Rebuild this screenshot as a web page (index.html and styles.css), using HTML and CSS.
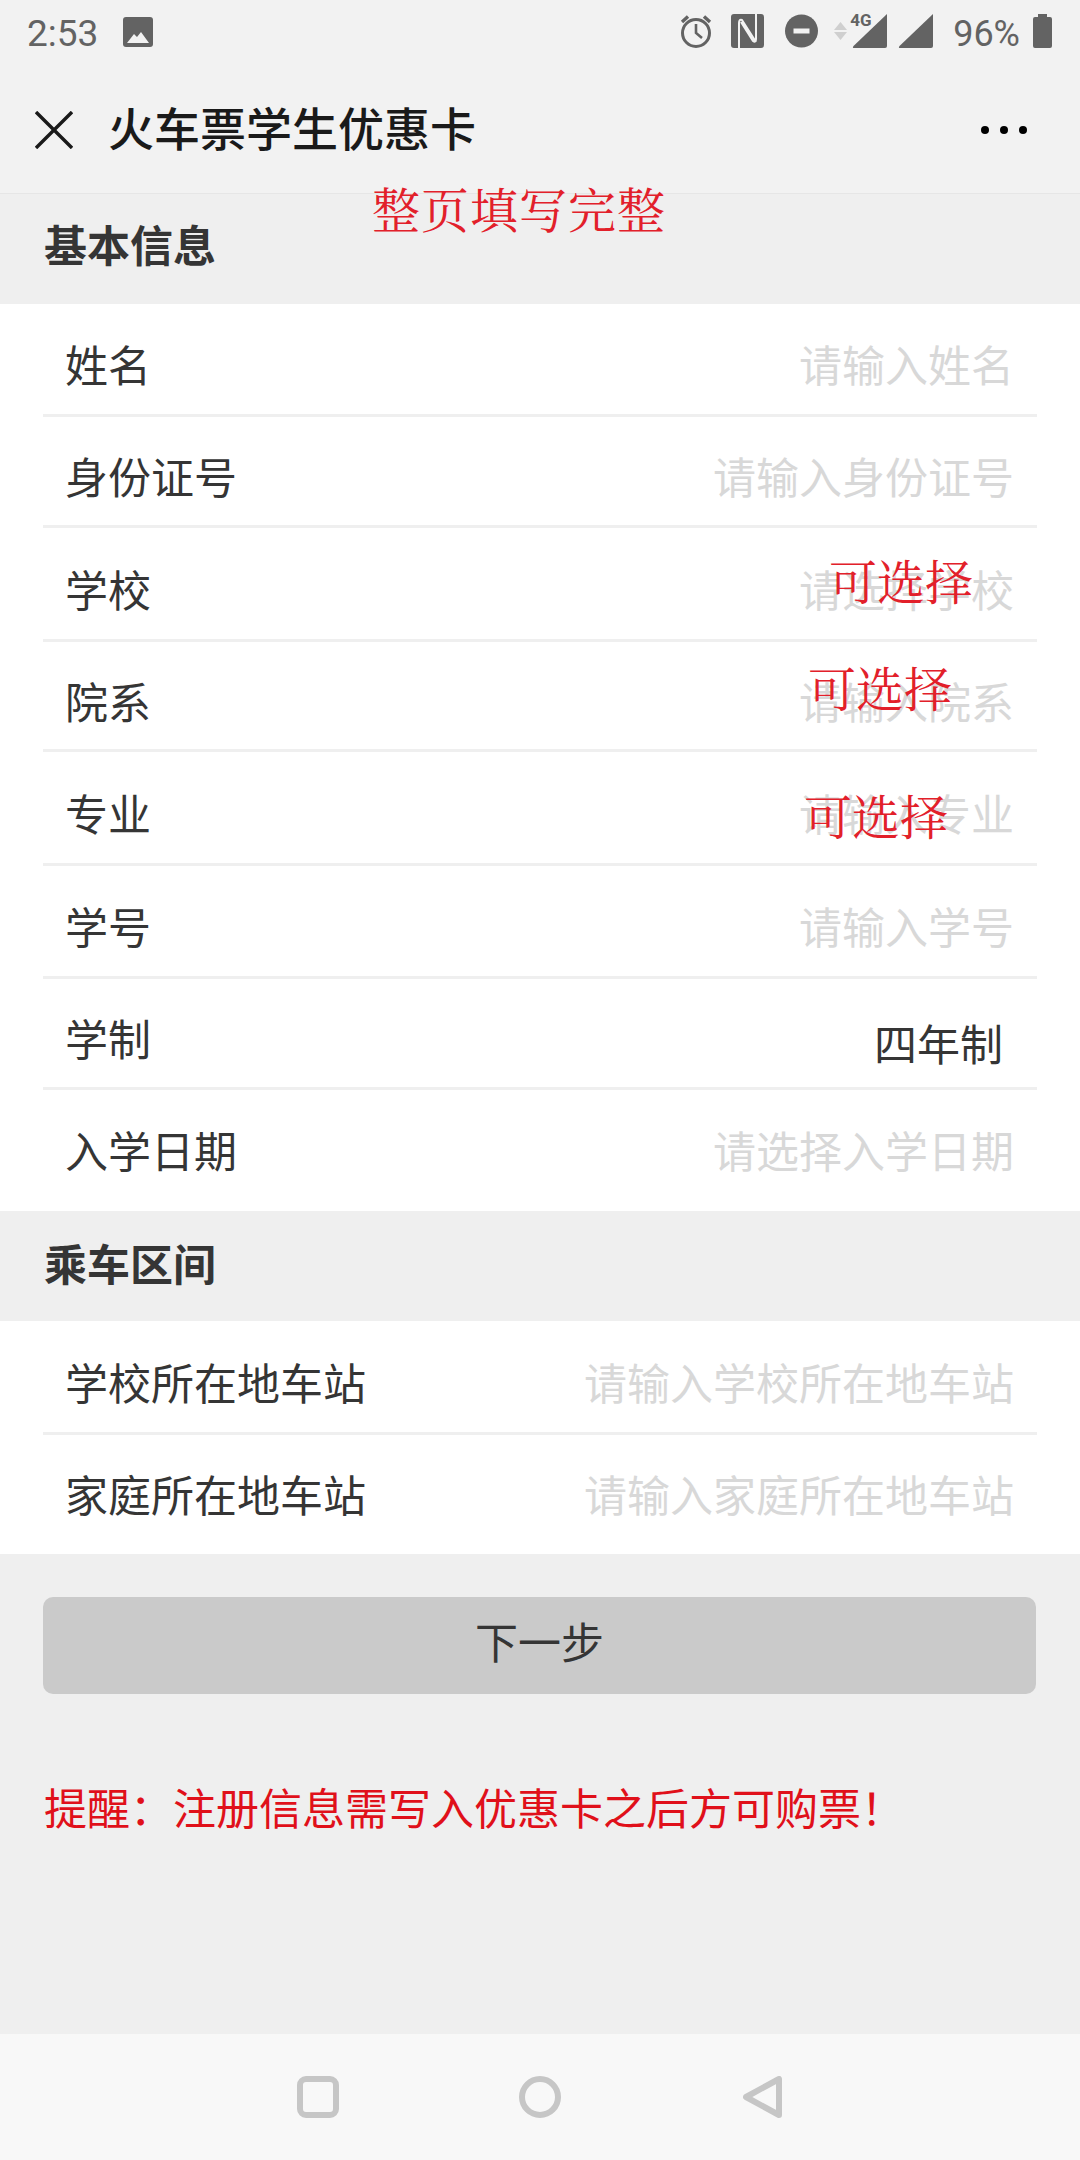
FILE: index.html
```html
<!DOCTYPE html>
<html lang="zh-CN">
<head>
  <meta charset="UTF-8" />
  <meta name="viewport" content="width=device-width, initial-scale=1.0"/>
  <title>火车票学生优惠卡</title>
  <link rel="stylesheet" href="styles.css">
</head>
<body>
  <!-- Status bar -->
  <div class="status-bar">
    <span class="clock">2:53</span>
    <svg class="pic-icon" width="30" height="30" viewBox="0 0 30 30"><rect width="30" height="30" rx="3" fill="#636363"/><path d="M4 26 L11 17 L14 20 L18 15 L26 26 Z" fill="#f2f2f2"/></svg>
    <div class="status-right">
      <svg class="alarm-icon" width="32" height="34" viewBox="0 0 32 34" fill="none" stroke="#636363" stroke-width="3"><circle cx="16" cy="19" r="13.5"/><path d="M16 10 V19 L22 24" stroke-width="2.6"/><path d="M2 8 L8 2.5 M30 8 L24 2.5" stroke-width="3.4"/></svg>
      <svg class="nfc-icon" width="33" height="34" viewBox="0 0 33 34"><rect width="33" height="34" rx="3" fill="#636363"/><path d="M8 34 V9 Q8 5 11 6 L25 28 M25 0 V25 Q25 29 22 27 L10 8" fill="none" stroke="#f2f2f2" stroke-width="2"/></svg>
      <svg width="33" height="34" viewBox="0 0 33 34"><circle cx="16.5" cy="17" r="16.5" fill="#636363"/><rect x="8.5" y="14.5" width="16" height="5" fill="#f2f2f2"/></svg>
      <div class="net">
        <svg width="13" height="18" viewBox="0 0 13 18" fill="#cfcfcf"><path d="M6.5 0 L13 8 H0 Z M0 10 H13 L6.5 18 Z"/></svg>
        <div class="net-signal">
          <span class="net-label">4G</span>
          <svg width="35" height="34" viewBox="0 0 35 34"><path d="M35 0 V32 Q35 34 33 34 H2 Q0 34 1.5 32 Z" fill="#636363"/></svg>
        </div>
      </div>
      <svg width="35" height="34" viewBox="0 0 35 34"><path d="M35 0 V32 Q35 34 33 34 H2 Q0 34 1.5 32 Z" fill="#636363"/></svg>
      <span class="battery-text">96%</span>
      <svg width="19" height="34" viewBox="0 0 19 34"><path d="M5 0 H14 V3 H17 Q19 3 19 5 V32 Q19 34 17 34 H2 Q0 34 0 32 V5 Q0 3 2 3 H5 Z" fill="#636363"/></svg>
    </div>
  </div>

  <!-- Top nav -->
  <div class="nav-bar">
    <svg class="close-icon" width="38" height="38" viewBox="0 0 38 38" stroke="#1a1a1a" stroke-width="3.4"><path d="M1 1 L37 37 M37 1 L1 37"/></svg>
    <h1 class="nav-title">火车票学生优惠卡</h1>
    <div class="more-dots"><i></i><i></i><i></i></div>
  </div>

  <div class="page">
    <div class="section-title">基本信息</div>
    <div class="form-group">
      <div class="form-row row-113"><span>姓名</span><span class="hint">请输入姓名</span></div>
      <div class="form-row row-111"><span>身份证号</span><span class="hint">请输入身份证号</span></div>
      <div class="form-row row-114"><span>学校</span><span class="hint">请选择学校</span></div>
      <div class="form-row row-110"><span>院系</span><span class="hint">请输入院系</span></div>
      <div class="form-row row-114"><span>专业</span><span class="hint">请输入专业</span></div>
      <div class="form-row row-113"><span>学号</span><span class="hint">请输入学号</span></div>
      <div class="form-row row-111"><span>学制</span><span class="value">四年制</span></div>
      <div class="form-row last-row"><span>入学日期</span><span class="hint">请选择入学日期</span></div>
    </div>

    <div class="section-title section-second">乘车区间</div>
    <div class="form-group">
      <div class="form-row row-114"><span>学校所在地车站</span><span class="hint">请输入学校所在地车站</span></div>
      <div class="form-row last-row short-last"><span>家庭所在地车站</span><span class="hint">请输入家庭所在地车站</span></div>
    </div>

    <div class="next-btn">下一步</div>
    <p class="reminder">提醒：注册信息需写入优惠卡之后方可购票！</p>
  </div>

  <!-- Bottom system nav -->
  <div class="sys-nav">
    <svg width="42" height="42" viewBox="0 0 42 42" fill="none" stroke="#c6c6c6" stroke-width="6"><rect x="3" y="3" width="36" height="36" rx="6"/></svg>
    <svg width="42" height="42" viewBox="0 0 42 42" fill="none" stroke="#c6c6c6" stroke-width="6"><circle cx="21" cy="21" r="18"/></svg>
    <svg class="back-icon" width="40" height="42" viewBox="0 0 40 42" fill="none" stroke="#c6c6c6" stroke-width="6" stroke-linejoin="round"><path d="M36 3 V39 L3 21 Z"/></svg>
  </div>

  <!-- Red notes drawn over the screenshot -->
  <div class="note note-page">整页填写完整</div>
  <div class="note note-school">可选择</div>
  <div class="note note-dept">可选择</div>
  <div class="note note-major">可选择</div>
</body>
</html>
```

FILE: styles.css
```css
* { margin: 0; padding: 0; box-sizing: border-box; }

body {
  position: relative;
  width: 1080px;
  height: 2160px;
  display: flex;
  flex-direction: column;
  overflow: hidden;
  background: #efefef;
  color: #353535;
  font-family: "Roboto", "Noto Sans CJK SC", sans-serif;
}

.status-bar {
  height: 70px;
  padding: 14px 28px 0 27px;
  display: flex;
  align-items: flex-start;
  background: #f2f2f2;
  color: #636363;
}

.clock {
  font-size: 37px;
  line-height: 36px;
  margin-top: 2px;
}

.pic-icon {
  margin: 3px 0 0 25px;
}

.status-right {
  margin-left: auto;
  display: flex;
  align-items: flex-start;
}

.status-right > svg {
  margin-right: 20px;
}

.status-right > .alarm-icon {
  margin-right: 19px;
}

.status-right > .nfc-icon {
  margin-right: 21px;
}

.net {
  display: flex;
  align-items: center;
  gap: 5px;
  margin: 0 11px 0 -4px;
  height: 34px;
}

.net-signal {
  position: relative;
  height: 34px;
}

.net-label {
  position: absolute;
  top: -1px;
  left: -2px;
  font-size: 17px;
  line-height: 14px;
  font-weight: 700;
}

.battery-text {
  font-size: 36px;
  line-height: 36px;
  margin: 2px 13px 0 0;
}

.status-right > svg:last-child {
  margin-right: 0;
}

.nav-bar {
  height: 124px;
  display: flex;
  align-items: center;
  padding: 0 53px 4px 35px;
  background: #f2f2f2;
  border-bottom: 1px solid #e6e6e6;
}

.nav-title {
  margin-left: 35px;
  padding-bottom: 8px;
  font-size: 46px;
  font-weight: 500;
  color: #1a1a1a;
}

.more-dots {
  margin-left: auto;
  display: flex;
  gap: 11px;
}

.more-dots i {
  width: 8px;
  height: 8px;
  border-radius: 50%;
  background: #000;
}

.page {
  flex: 1;
}

.section-title {
  height: 110px;
  padding: 28px 0 0 44px;
  font-size: 43px;
  line-height: 50px;
  font-weight: 700;
}

.section-second {
  padding-top: 30px;
}

.form-group {
  background: #fff;
}

.form-row {
  margin: 0 43px;
  padding: 8px 23px 0 22px;
  display: flex;
  align-items: center;
  justify-content: space-between;
  font-size: 43px;
  border-bottom: 3px solid #efefef;
}

.row-110 { height: 110px; }
.row-111 { height: 111px; }
.row-113 { height: 113px; }
.row-114 { height: 114px; }

.last-row {
  height: 121px;
  padding-bottom: 12px;
  border-bottom: none;
}

.short-last {
  height: 119px;
}

.hint {
  color: #d8d8d8;
}

.value {
  padding: 10px 11px 0 0;
}

.next-btn {
  height: 97px;
  margin: 43px 44px 0 43px;
  padding-bottom: 11px;
  display: flex;
  align-items: center;
  justify-content: center;
  background: #cacaca;
  border-radius: 10px;
  font-size: 43px;
}

.reminder {
  margin: 91px 0 0 44px;
  font-size: 43px;
  line-height: 50px;
  color: #e0101a;
}

.sys-nav {
  height: 126px;
  padding: 42px 0 0 297px;
  display: flex;
  gap: 180px;
  align-items: flex-start;
  background: #f8f8f8;
}

.back-icon {
  margin-left: 2px;
}

.note {
  position: absolute;
  font-family: "Noto Serif CJK SC", "Liberation Serif", serif;
  font-size: 48px;
  line-height: 48px;
  color: #e2202a;
}

.note-page { left: 372px; top: 184px; letter-spacing: 1px; }
.note-school { left: 829px; top: 556px; }
.note-dept { left: 808px; top: 663px; }
.note-major { left: 804px; top: 791px; }
```
